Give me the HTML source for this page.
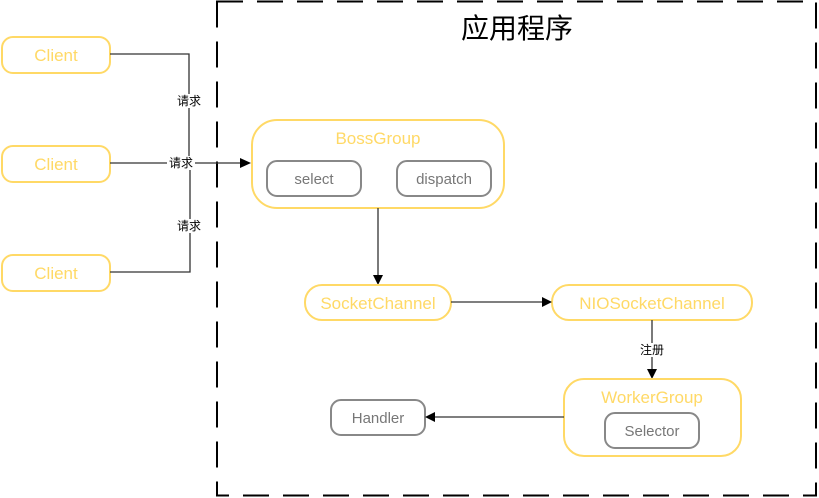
<!DOCTYPE html>
<html><head><meta charset="utf-8"><style>
html,body{margin:0;padding:0;background:#fff;width:819px;height:498px;overflow:hidden}
svg{display:block}
text{font-family:"Liberation Sans","Noto Sans CJK SC",sans-serif}
.y{fill:#fff;stroke:#FFD966;stroke-width:2}
.g{fill:#fff;stroke:#888;stroke-width:2}
.yt{fill:#FFD966;font-size:17px;text-anchor:middle}
.gt{fill:#777;font-size:15px;text-anchor:middle}
.l{stroke:#333;stroke-width:1.3;fill:none}
.lb{font-size:12px;text-anchor:middle;fill:#000}
</style></head><body>
<svg width="819" height="498" viewBox="0 0 819 498">
<rect x="217" y="1.5" width="599" height="494" fill="none" stroke="#000" stroke-width="2" stroke-dasharray="26,14"/>
<text x="517" y="38" font-size="28" text-anchor="middle" fill="#000">应用程序</text>

<rect class="y" x="2" y="37" width="108" height="36" rx="11"/>
<text class="yt" x="56" y="61">Client</text>
<rect class="y" x="2" y="146" width="108" height="36" rx="11"/>
<text class="yt" x="56" y="170">Client</text>
<rect class="y" x="2" y="255" width="108" height="36" rx="11"/>
<text class="yt" x="56" y="279">Client</text>

<polyline class="l" points="110,54 189,54 189,163"/>
<polyline class="l" points="110,272 190,272 190,163"/>
<line class="l" x1="110" y1="163" x2="241" y2="163" stroke="#000"/>
<polygon points="240,158 251,163 240,168" fill="#000"/>
<rect x="174" y="94" width="30" height="14" fill="#fff"/>
<text class="lb" x="189" y="105">请求</text>
<rect x="167" y="156" width="28" height="14" fill="#fff"/>
<text class="lb" x="181" y="167">请求</text>
<rect x="174" y="219" width="30" height="14" fill="#fff"/>
<text class="lb" x="189" y="230">请求</text>

<rect class="y" x="252" y="120" width="252" height="88" rx="25"/>
<text class="yt" x="378" y="144">BossGroup</text>
<rect class="g" x="267" y="161" width="94" height="35" rx="10"/>
<text class="gt" x="314" y="184">select</text>
<rect class="g" x="397" y="161" width="94" height="35" rx="10"/>
<text class="gt" x="444" y="184">dispatch</text>

<line class="l" x1="378" y1="208" x2="378" y2="276"/>
<polygon points="373,275 378,285 383,275" fill="#000"/>

<rect class="y" x="305" y="285" width="146" height="35" rx="17"/>
<text class="yt" x="378" y="309">SocketChannel</text>
<rect class="y" x="552" y="285" width="200" height="35" rx="17"/>
<text class="yt" x="652" y="309">NIOSocketChannel</text>
<line class="l" x1="451" y1="302" x2="543" y2="302"/>
<polygon points="542,297 552,302 542,307" fill="#000"/>

<line class="l" x1="652" y1="320" x2="652" y2="370"/>
<polygon points="647,369 652,379 657,369" fill="#000"/>
<rect x="638" y="343" width="28" height="14" fill="#fff"/>
<text class="lb" x="652" y="354">注册</text>

<rect class="y" x="564" y="379" width="177" height="77" rx="20"/>
<text class="yt" x="652" y="403">WorkerGroup</text>
<rect class="g" x="605" y="413" width="94" height="35" rx="10"/>
<text class="gt" x="652" y="436">Selector</text>

<rect class="g" x="331" y="400" width="94" height="35" rx="10"/>
<text class="gt" x="378" y="423">Handler</text>
<line class="l" x1="564" y1="417" x2="434" y2="417"/>
<polygon points="435,412 425,417 435,422" fill="#000"/>
</svg>
</body></html>
